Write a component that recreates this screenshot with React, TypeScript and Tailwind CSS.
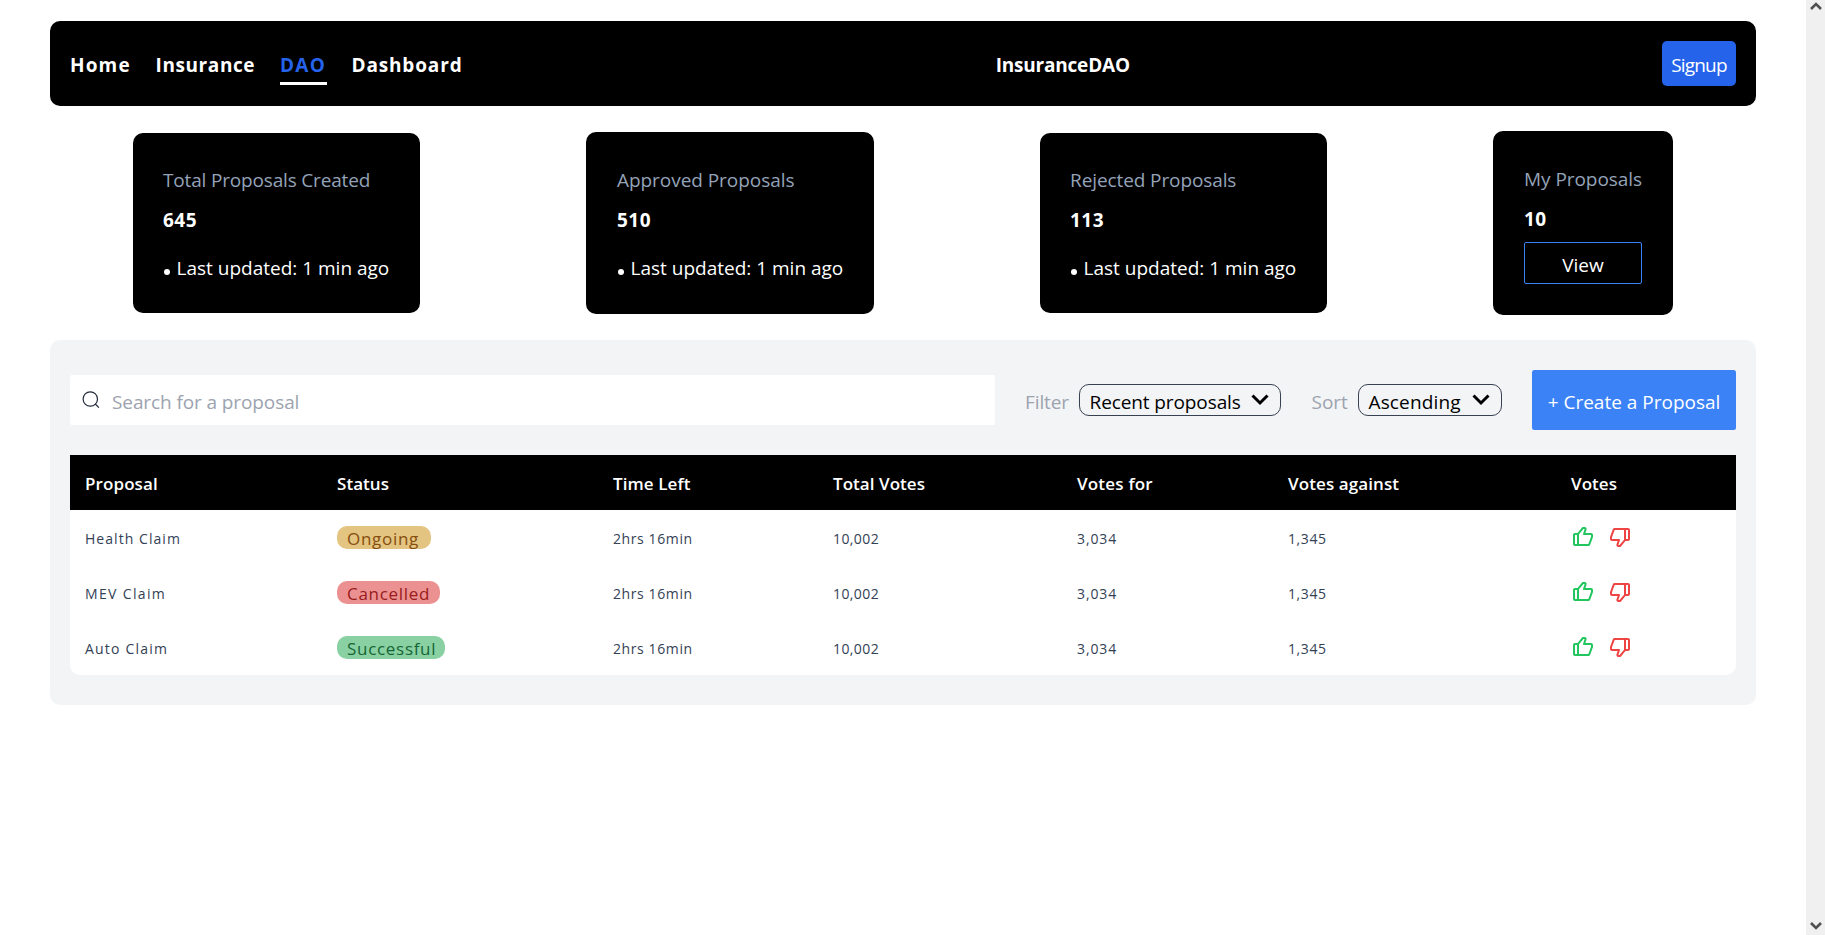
import { BiLike, BiDislike } from "react-icons/bi";

const navItems = [
  { label: "Home", width: "w-[60.5px]", tracking: "tracking-[1.15px]" },
  { label: "Insurance", width: "w-[99.5px]", tracking: "tracking-[0.6px]" },
  { label: "DAO", width: "w-[46.5px]", tracking: "tracking-[1.3px]", active: true },
  { label: "Dashboard", width: "w-[112px]", tracking: "tracking-[0.85px]" },
];

const stats = [
  { title: "Total Proposals Created", value: "645", size: "h-[180px] w-[287px] pl-[30px]", tracking: "tracking-[-0.17px]" },
  { title: "Approved Proposals", value: "510", size: "h-[182px] w-[288px] pl-[31px]", tracking: "tracking-[-0.05px]" },
  { title: "Rejected Proposals", value: "113", size: "h-[180px] w-[287px] pl-[30px]", tracking: "tracking-[-0.1px]" },
];

const headers = [
  { label: "Proposal", tracking: "tracking-[0.1px]" },
  { label: "Status", tracking: "tracking-[0.05px]" },
  { label: "Time Left", tracking: "tracking-[0.1px]" },
  { label: "Total Votes", tracking: "tracking-[0.05px]" },
  { label: "Votes for", tracking: "tracking-[0.2px]" },
  { label: "Votes against", tracking: "tracking-[0.1px]" },
  { label: "Votes", tracking: "tracking-[0.05px]" },
];

const rows = [
  { name: "Health Claim", tracking: "tracking-[1.05px]", status: "Ongoing", badge: "bg-[#e3c480] text-[#854d0e] w-[94px]" },
  { name: "MEV Claim", tracking: "tracking-[1.35px]", status: "Cancelled", badge: "bg-[#ec9191] text-[#991b1b] w-[103px]" },
  { name: "Auto Claim", tracking: "tracking-[1.2px]", status: "Successful", badge: "bg-[#89d1a3] text-[#166534] w-[108px]" },
];

const columns = "grid grid-cols-[252px_276px_220px_244px_211px_283px_1fr] items-center pl-[15px]";

function Select({ value, className }: { value: string; className: string }) {
  return (
    <button
      className={`flex h-8 items-center justify-between rounded-[10px] border border-[#374151] pl-[9.5px] pr-[11px] text-black ${className}`}
    >
      <span className="translate-y-[2px]">{value}</span>
      <svg width="18" height="12" viewBox="0 0 18 12" fill="none" stroke="currentColor" strokeWidth="3">
        <path d="M1.5 1.5 9 9l7.5-7.5" />
      </svg>
    </button>
  );
}

function Navbar() {
  return (
    <nav className="flex h-[85px] items-center justify-between rounded-[10px] bg-black px-5 text-white">
      <div className="flex gap-[25px] font-bold">
        {navItems.map((item) => (
          <a key={item.label} className={`relative block h-[30px] leading-[30px] ${item.width} ${item.tracking}`}>
            <span className={`block translate-y-px whitespace-nowrap ${item.active ? "text-[#2563eb]" : ""}`}>
              {item.label}
            </span>
            {item.active && <span className="absolute -bottom-[6px] left-0 h-[3px] w-[47px] bg-white" />}
          </a>
        ))}
      </div>
      <span className="translate-y-px font-bold tracking-[-0.2px]">InsuranceDAO</span>
      <button className="flex h-[45px] w-[74px] items-center justify-center rounded-[5px] bg-[#2563eb] tracking-[-0.85px]">
        <span className="translate-y-px">Signup</span>
      </button>
    </nav>
  );
}

function Stats() {
  return (
    <section className="mt-[25px] flex h-[184px] items-center justify-around">
      {stats.map((s) => (
        <div key={s.title} className={`flex flex-col justify-center rounded-[10px] bg-black text-white ${s.size}`}>
          <div className="h-[120px] translate-y-[2px] whitespace-nowrap leading-[30px]">
            <p className={`text-[#94a3b8] ${s.tracking}`}>{s.title}</p>
            <p className="mt-[10px] font-bold tracking-[0.5px]">{s.value}</p>
            <p className="mt-[18px] flex items-center gap-[7px]">
              <span className="ml-[0.5px] mt-[7px] size-[6px] rounded-full bg-white" />
              Last updated: 1 min ago
            </p>
          </div>
        </div>
      ))}
      <div className="flex h-[184px] w-[180px] flex-col rounded-[10px] bg-black px-[31px] pt-8 leading-[30px] text-white">
        <p className="translate-y-px whitespace-nowrap tracking-[-0.05px] text-[#94a3b8]">My Proposals</p>
        <p className="mt-[10px] translate-y-px font-bold tracking-[0.5px]">10</p>
        <button className="mt-[9px] h-[42px] rounded-[2px] border border-[#3b82f6]">
          <span className="block translate-y-[2px]">View</span>
        </button>
      </div>
    </section>
  );
}

function Toolbar() {
  return (
    <div className="flex h-[60px] items-center">
      <div className="flex h-[50px] w-[925px] items-center rounded-[2px] bg-white pl-3">
        <svg width="18" height="18" viewBox="0 0 18 18" fill="none" stroke="#1f2937" strokeWidth="1.2">
          <circle cx="8.3" cy="8" r="7.2" />
          <path d="m13.3 13 3.6 3.6" />
        </svg>
        <input
          className="ml-3 w-[600px] translate-y-[2px] tracking-[-0.1px] outline-none placeholder:text-[#9ca3af]"
          placeholder="Search for a proposal"
        />
      </div>
      <span className="ml-[30px] w-[54px] translate-y-[2px] tracking-[-0.1px] text-[#9ca3af]">Filter</span>
      <Select value="Recent proposals" className="w-[202px] tracking-[-0.1px]" />
      <span className="ml-[30.5px] w-[46.5px] translate-y-[2px] text-[#9ca3af]">Sort</span>
      <Select value="Ascending" className="w-[144px] tracking-[0.15px]" />
      <button className="ml-auto flex h-[60px] w-[204px] items-center justify-center rounded-[2.5px] bg-[#3b82f6] text-white">
        <span className="translate-y-[2px]">+ Create a Proposal</span>
      </button>
    </div>
  );
}

function ProposalTable() {
  return (
    <div className="mt-[25px] overflow-hidden rounded-b-[10px] bg-white">
      <div className={`h-[55px] bg-black text-[17px] font-semibold text-white ${columns}`}>
        {headers.map((h) => (
          <span key={h.label} className={`translate-y-px ${h.tracking}`}>
            {h.label}
          </span>
        ))}
      </div>
      {rows.map((r) => (
        <div key={r.name} className={`h-[55px] text-[14px] tracking-[0.9px] text-[#334155] ${columns}`}>
          <span className={`translate-y-px ${r.tracking}`}>{r.name}</span>
          <span className={`flex h-[23px] items-center rounded-[10px] pl-[10px] text-[17px] tracking-[0.7px] ${r.badge}`}>
            <span className="translate-y-px">{r.status}</span>
          </span>
          <span className="translate-y-px tracking-[0.6px]">2hrs 16min</span>
          <span className="translate-y-px tracking-[0.4px]">10,002</span>
          <span className="translate-y-px">3,034</span>
          <span className="translate-y-px tracking-[0.6px]">1,345</span>
          <span className="flex gap-[13px] pb-px">
            <BiLike size={24} className="text-[#22c55e]" />
            <BiDislike size={24} className="text-[#ef4444]" />
          </span>
        </div>
      ))}
    </div>
  );
}

function Scrollbar() {
  return (
    <div className="flex w-[19px] flex-col items-center justify-between bg-[#f0f0f0] pb-[5px] pt-[2px]">
      <svg width="12" height="9" viewBox="0 0 12 9" fill="none" stroke="#505050" strokeWidth="2.6">
        <path d="m1 7 5-5 5 5" />
      </svg>
      <svg width="12" height="9" viewBox="0 0 12 9" fill="none" stroke="#505050" strokeWidth="2.6">
        <path d="m1 2 5 5 5-5" />
      </svg>
    </div>
  );
}

export default function App() {
  return (
    <div className="flex h-[935px] overflow-hidden bg-white font-['Open_Sans',sans-serif] text-[19px] leading-[30px]">
      <main className="flex-1 px-[50px] pt-[21px]">
        <Navbar />
        <Stats />
        <section className="mt-[25px] h-[365px] rounded-[10px] bg-[#f3f4f6] px-5 pt-[30px]">
          <Toolbar />
          <ProposalTable />
        </section>
      </main>
      <Scrollbar />
    </div>
  );
}
